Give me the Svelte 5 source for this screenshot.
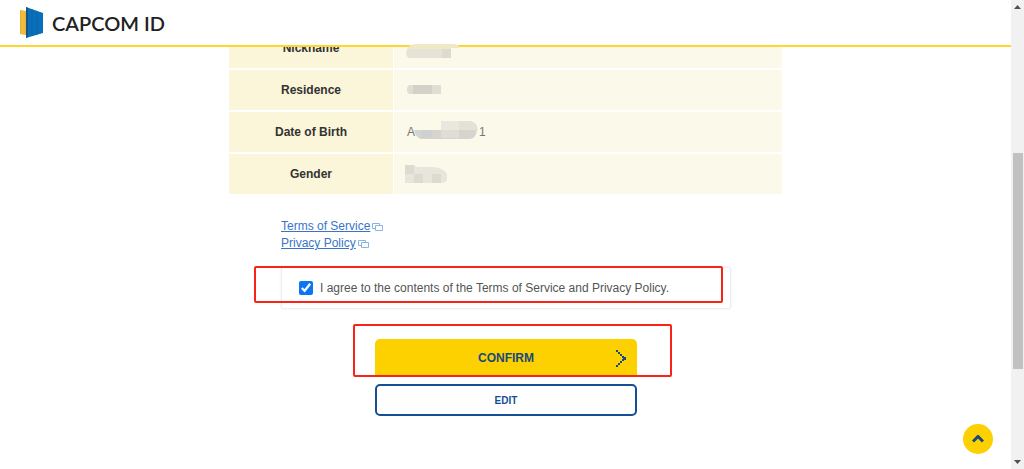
<script>
  let agreed = true;

  const rows = [
    {
      label: 'Nickname',
      before: '',
      after: '',
      shapes: [
        { d: 'M0 15 Q1 8 9 8 H45 Q52 8 53 12 H44 V22 H3 Q-2 21 0 15Z', fill: '#f0e7c3' },
        { d: 'M0 13 H44 V22 H3 Q-2 21 0 13Z', fill: '#e5e3d8' },
        { d: 'M35 13 H44 V22 H35Z', fill: '#dddbd0' }
      ]
    },
    {
      label: 'Residence',
      before: '',
      after: '',
      shapes: [
        { d: 'M3 7 H34 V16 H3 Q0 16 0 12 Q0 7 3 7Z', fill: '#e0ded2' },
        { d: 'M6 7 H25 V16 H6Z', fill: '#d3d1ca' }
      ]
    },
    {
      label: 'Date of Birth',
      before: 'A',
      after: '1',
      shapes: [
        { d: 'M7 10 H70 Q69 19 62 19 H14 Q9 18 7 10Z', fill: '#d5d4ce' },
        { d: 'M14 10 H25 V18 H14Z', fill: '#cfd0d2' },
        { d: 'M34 1 H63 Q70 2 71 10 H34Z', fill: '#e9e8de' },
        { d: 'M34 10 H52 V18 H34Z', fill: '#dfded5' },
        { d: 'M52 1 H63 Q70 2 71 10 H52Z', fill: '#e3e2d8' }
      ]
    },
    {
      label: 'Gender',
      before: '',
      after: '',
      shapes: [
        { d: 'M-2 3 H7 L9 5 H26 Q37 6 40 12 V18 Q39 21 33 21 H-2Z', fill: '#e8e6dc' },
        { d: 'M-2 3 H7 V12 H-2Z M7 12 H16 V21 H7Z M25 12 H34 V21 H25Z', fill: '#dddbd0' }
      ]
    }
  ];

  const links = ['Terms of Service', 'Privacy Policy'];
</script>

<div class="window">
  <div class="page">
    <header class="header">
      <a class="logo" href="/" aria-label="CAPCOM ID">
        <svg width="23" height="32" viewBox="0 0 23 32" aria-hidden="true">
          <path d="M0 3 L6 4 V28 L0 27Z" fill="#e9b52c" />
          <path d="M2 3 V27 M4 4 V28" stroke="#efc655" stroke-width="1" />
          <path d="M6 0 L23 6 V26 L6 31Z" fill="#086fb8" />
          <path d="M6 0 L8 1 V30 L6 31Z" fill="#15558c" />
          <path d="M12 2 V29 M17 4 V28" stroke="#0b67ac" stroke-width="1" />
        </svg>
        <span>CAPCOM ID</span>
      </a>
    </header>

    <main class="content">
      <table class="profile">
        <tbody>
          {#each rows as row}
            <tr>
              <th scope="row">{row.label}</th>
              <td>
                <div class="value">
                  <span>{row.before}</span>
                  <svg class="mask" width="80" height="24" viewBox="0 0 80 24" aria-hidden="true">
                    {#each row.shapes as shape}
                      <path d={shape.d} fill={shape.fill} />
                    {/each}
                  </svg>
                  {#if row.after}<span class="after">{row.after}</span>{/if}
                </div>
              </td>
            </tr>
          {/each}
        </tbody>
      </table>

      <div class="form">
        <ul class="links">
          {#each links as link}
            <li>
              <a href="#terms">{link}</a>
              <svg width="11" height="8" viewBox="0 0 11 8" fill="none" stroke="#86b4e4" aria-hidden="true">
                <path d="M3 5.5 H0.5 V0.5 H7.5 V2" />
                <path d="M3.5 2.5 H10.5 V7.5 H3.5Z" />
              </svg>
            </li>
          {/each}
        </ul>

        <div class="agree">
          <input id="agree" type="checkbox" bind:checked={agreed} />
          <label for="agree">I agree to the contents of the Terms of Service and Privacy Policy.</label>
          <span class="marker marker-agree"></span>
        </div>

        <div class="actions">
          <button class="confirm" type="button" disabled={!agreed}>
            CONFIRM
            <svg width="10" height="17" viewBox="0 0 10 17" fill="#164a7d" aria-hidden="true">
              <path d="M0 0h2v2h-2z M2 2h2v2h-2z M4 4h2v2h-2z M6 6h2v2h-2z M7 7h3v3h-3z M6 9h2v2h-2z M4 11h2v2h-2z M2 13h2v2h-2z M0 15h2v2h-2z" />
            </svg>
          </button>
          <button class="edit" type="button">EDIT</button>
          <span class="marker marker-confirm"></span>
        </div>
      </div>
    </main>

    <button class="to-top" type="button" aria-label="Back to top">
      <svg width="12" height="9" viewBox="0 0 12 9" fill="none" stroke="#164a7d" stroke-width="3" aria-hidden="true">
        <path d="M1 6.5 L6 1.5 L11 6.5" />
      </svg>
    </button>
  </div>

  <div class="scrollbar" aria-hidden="true">
    <svg width="7" height="4" viewBox="0 0 7 4"><path d="M3.5 0 L7 4 H0Z" fill="#505050" /></svg>
    <div class="track"><div class="thumb"></div></div>
    <svg width="7" height="4" viewBox="0 0 7 4"><path d="M0 0 H7 L3.5 4Z" fill="#505050" /></svg>
  </div>
</div>

<style>
  :global(body) {
    margin: 0;
    background: #fff;
  }
  .window {
    display: flex;
    height: 100vh;
    overflow: hidden;
    font-family: 'Liberation Sans', Arial, sans-serif;
    font-size: 12px;
    color: #333;
  }
  .page {
    position: relative;
    flex: 1;
    min-width: 0;
  }
  .header {
    position: absolute;
    top: 0;
    left: 0;
    right: 0;
    z-index: 2;
    display: flex;
    align-items: center;
    box-sizing: border-box;
    height: 47px;
    padding: 0 20px;
    background: #fff;
    border-bottom: 2px solid #fbd72f;
  }
  .logo {
    display: flex;
    align-items: center;
    gap: 9px;
    color: #222;
    font-family: Lato, sans-serif;
    font-size: 20px;
    font-weight: 600;
    text-decoration: none;
  }
  .content {
    max-width: 553px;
    margin: 0 auto;
    padding-top: 26px;
  }
  .profile {
    width: 100%;
    border-collapse: separate;
    border-spacing: 0 2px;
    table-layout: fixed;
  }
  th,
  td {
    box-sizing: border-box;
    height: 40px;
    padding: 0;
    background: #fbf9ea;
  }
  th {
    width: 165px;
    background: #fbf5d9;
    border-right: 1px solid #fff;
  }
  .value {
    position: relative;
    display: flex;
    align-items: center;
    height: 24px;
    padding-left: 13px;
    color: #777;
  }
  .mask {
    position: absolute;
    left: 13px;
    z-index: 3;
    overflow: visible;
  }
  .after {
    margin-left: 64px;
  }
  .form {
    padding: 22px 51px 0 52px;
  }
  .links {
    margin: 0;
    padding: 0;
    list-style: none;
    line-height: 17px;
  }
  .links li {
    display: flex;
    align-items: center;
    gap: 2px;
  }
  .links a {
    color: #3a74c8;
  }
  .agree {
    position: relative;
    display: flex;
    align-items: center;
    box-sizing: border-box;
    height: 42px;
    margin-top: 15px;
    padding-left: 17px;
    border: 1px solid #eee;
    border-radius: 2px;
    box-shadow: 0 0 3px #eee;
    color: #555;
  }
  .agree input {
    width: 14px;
    height: 14px;
    margin: 0 7px 0 0;
    accent-color: #0b75f5;
  }
  .marker {
    position: absolute;
    box-sizing: border-box;
    border: 2px solid #fa2318;
    border-radius: 2px;
    pointer-events: none;
  }
  .marker-agree {
    top: -2px;
    left: -28px;
    right: 7px;
    bottom: 5px;
  }
  .actions {
    position: relative;
    display: flex;
    flex-direction: column;
    width: 262px;
    margin: 30px auto 0;
  }
  .marker-confirm {
    top: -15px;
    left: -22px;
    right: -35px;
    height: 53px;
  }
  button {
    padding: 0;
    font-family: inherit;
    font-weight: 700;
    color: #164a7d;
    cursor: pointer;
  }
  .confirm {
    position: relative;
    height: 37px;
    border: 0;
    border-radius: 5px 5px 0 0;
    background: #fdd000;
    font-size: 12px;
  }
  .confirm svg {
    position: absolute;
    top: 11px;
    right: 11px;
  }
  .edit {
    height: 32px;
    margin-top: 8px;
    border: 2px solid #164f96;
    border-radius: 5px;
    background: #fff;
    color: #164f96;
    font-size: 10px;
  }
  .to-top {
    position: absolute;
    right: 18px;
    bottom: 15px;
    display: flex;
    align-items: center;
    justify-content: center;
    width: 30px;
    height: 30px;
    border: 0;
    border-radius: 50%;
    background: #fdd000;
  }
  .scrollbar {
    display: flex;
    flex-direction: column;
    align-items: center;
    box-sizing: border-box;
    width: 13px;
    padding: 5px 0;
    background: #f1f1f1;
  }
  .track {
    flex: 1;
    width: 10px;
  }
  .thumb {
    width: 100%;
    height: 48%;
    margin-top: 144px;
    background: #c1c1c1;
  }
</style>
